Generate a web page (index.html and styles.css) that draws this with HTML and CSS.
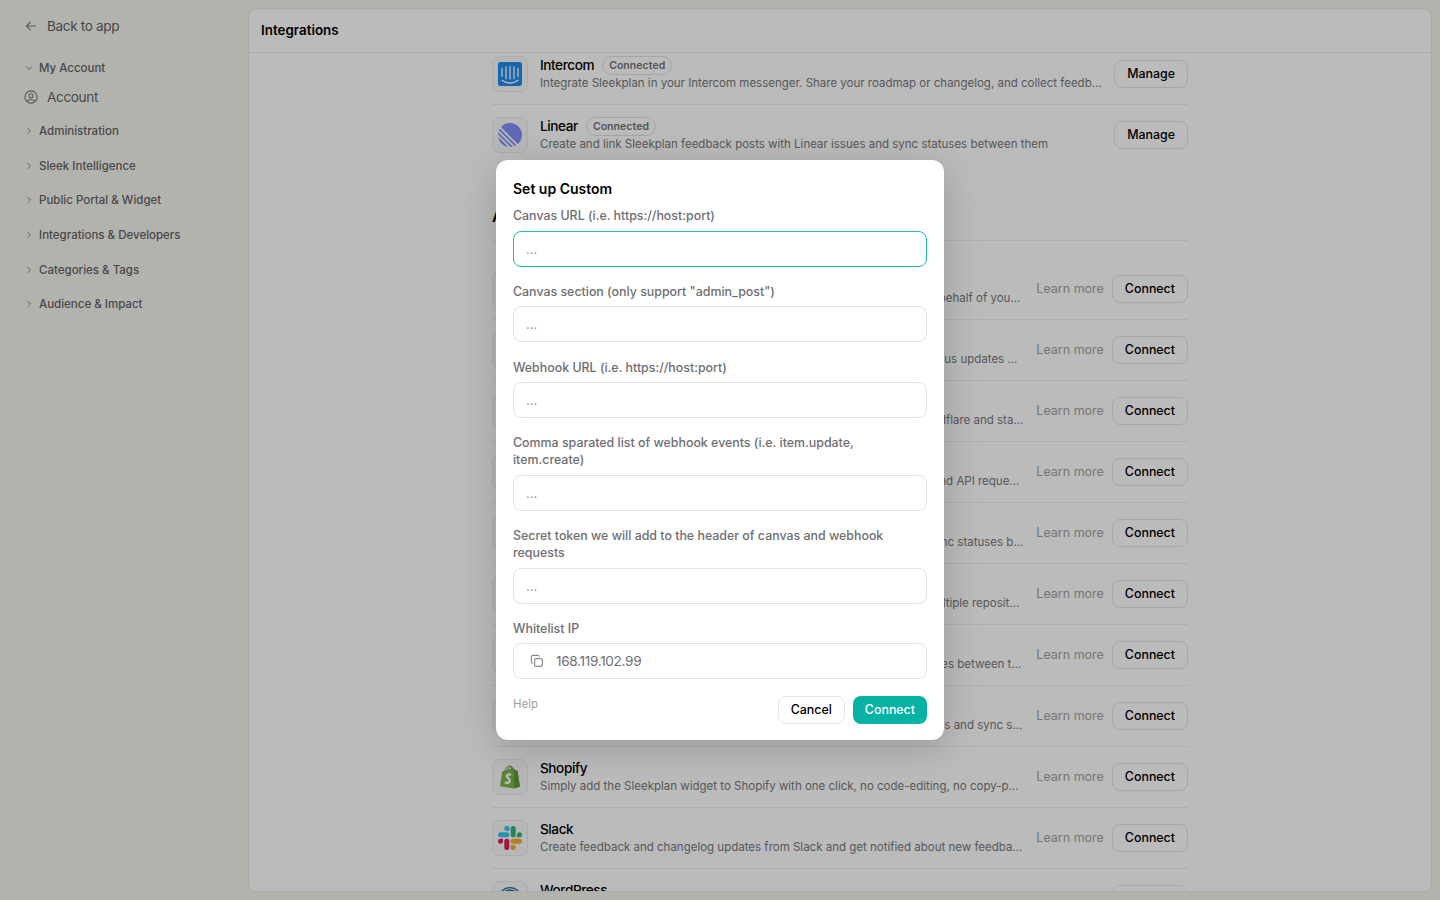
FILE: index.html
```html
<!DOCTYPE html>
<html lang="en">
<head>
<meta charset="utf-8">
<title>Integrations</title>
<link rel="stylesheet" href="styles.css">
</head>
<body>
<div class="app">
  <nav class="sidebar">
    <a class="nav-link back"><svg width="16" height="16" viewBox="0 0 16 16"><path d="M12.500 8h-9M7.300 4.200 3.500 8l3.800 3.800"/></svg><span>Back to app</span></a>
    <div class="nav-group first"><svg width="8" height="8" viewBox="0 0 8 8"><path d="M1.200 2.700 4 5.500l2.800-2.800"/></svg><span>My Account</span></div>
    <a class="nav-link account"><svg width="16" height="16" viewBox="0 0 16 16"><circle cx="8" cy="8" r="6.100"/><circle cx="8" cy="6.800" r="2"/><path d="M4.300 12.700c.3-1.500 1.300-2 2.500-2h2.400c1.200 0 2.200.5 2.500 2"/></svg><span>Account</span></a>
    <div class="nav-group"><svg width="8" height="8" viewBox="0 0 8 8"><path d="M2.700 1.200 5.500 4 2.700 6.800"/></svg><span>Administration</span></div>
    <div class="nav-group"><svg width="8" height="8" viewBox="0 0 8 8"><path d="M2.700 1.200 5.500 4 2.700 6.800"/></svg><span>Sleek Intelligence</span></div>
    <div class="nav-group"><svg width="8" height="8" viewBox="0 0 8 8"><path d="M2.700 1.200 5.500 4 2.700 6.800"/></svg><span>Public Portal &amp; Widget</span></div>
    <div class="nav-group"><svg width="8" height="8" viewBox="0 0 8 8"><path d="M2.700 1.200 5.500 4 2.700 6.800"/></svg><span>Integrations &amp; Developers</span></div>
    <div class="nav-group"><svg width="8" height="8" viewBox="0 0 8 8"><path d="M2.700 1.200 5.500 4 2.700 6.800"/></svg><span>Categories &amp; Tags</span></div>
    <div class="nav-group"><svg width="8" height="8" viewBox="0 0 8 8"><path d="M2.700 1.200 5.500 4 2.700 6.800"/></svg><span>Audience &amp; Impact</span></div>
  </nav>
  <main class="panel">
    <header class="panel-head">Integrations</header>
    <div class="scroll">
      <div class="list">
        <div class="row">
          <div class="logo"><svg width="24" height="24" viewBox="0 0 24 24"><rect width="24" height="24" rx="2.500" fill="#1f8ded"/><path d="M4 6.500v8M8 5v11.500M12 4.500v12.500M16 5v11.500M20 6.500v8M4 18.300c4.500 3.600 11.500 3.600 16 0" fill="none" stroke="#fff" stroke-width="1.300" stroke-linecap="round"/></svg></div>
          <div class="info"><div class="name"><span>Intercom</span><span class="badge">Connected</span></div><div class="desc">Integrate Sleekplan in your Intercom messenger. Share your roadmap or changelog, and collect feedb...</div></div>
          <button class="btn manage">Manage</button>
        </div>
        <div class="row last">
          <div class="logo"><svg width="24" height="24" viewBox="0 0 100 100" fill="#8091f8"><path d="M1.200 61.500c-.2-1 .9-1.600 1.600-.9l36.600 36.600c.7.700.1 1.800-.9 1.600C20 94.500 5.500 80 1.200 61.500ZM0 46.900c0 .300.100.500.300.700l52.100 52.100c.200.200.4.300.7.300 2.400-.2 4.700-.5 6.900-.900.8-.2 1-1.100.5-1.600L2.600 39.500c-.5-.5-1.500-.3-1.600.5-.5 2.200-.8 4.500-1 6.900ZM4.200 29.700c-.2.400-.1.800.2 1.100l64.800 64.800c.300.3.7.4 1.100.200 1.800-.8 3.500-1.700 5.200-2.700.5-.3.600-1 .2-1.500L8.400 24.300c-.4-.4-1.200-.3-1.500.200-1 1.700-1.900 3.400-2.700 5.200ZM12.700 18.100c-.4-.4-.4-1 0-1.400C21.800 6.500 35.200 0 50.100 0 77.600 0 100 22.400 100 49.900c0 14.900-6.500 28.300-16.700 37.400-.4.400-1 .4-1.400 0L12.700 18.100Z"/></svg></div>
          <div class="info"><div class="name"><span>Linear</span><span class="badge">Connected</span></div><div class="desc">Create and link Sleekplan feedback posts with Linear issues and sync statuses between them</div></div>
          <button class="btn manage">Manage</button>
        </div>
        <h2 class="section">A</h2>
        <div class="row"><div class="logo"></div><div class="info tail" style="padding-right:4px">behalf of you...</div><a class="learn">Learn more</a><button class="btn">Connect</button></div>
        <div class="row"><div class="logo"></div><div class="info tail" style="padding-right:7px">us updates ...</div><a class="learn">Learn more</a><button class="btn">Connect</button></div>
        <div class="row"><div class="logo"></div><div class="info tail">dflare and sta...</div><a class="learn">Learn more</a><button class="btn">Connect</button></div>
        <div class="row"><div class="logo"></div><div class="info tail" style="padding-right:5px">nd API reque...</div><a class="learn">Learn more</a><button class="btn">Connect</button></div>
        <div class="row"><div class="logo"></div><div class="info tail">nc statuses b...</div><a class="learn">Learn more</a><button class="btn">Connect</button></div>
        <div class="row"><div class="logo"></div><div class="info tail" style="padding-right:5px">ltiple reposit...</div><a class="learn">Learn more</a><button class="btn">Connect</button></div>
        <div class="row"><div class="logo"></div><div class="info tail" style="padding-right:3px">es between t...</div><a class="learn">Learn more</a><button class="btn">Connect</button></div>
        <div class="row"><div class="logo"></div><div class="info tail" style="padding-right:2px">s and sync s...</div><a class="learn">Learn more</a><button class="btn">Connect</button></div>
        <div class="row">
          <div class="logo"><svg width="24" height="24" viewBox="0 0 24 24"><path d="m2 21.200 2.200-14.700 3.300-1L15 3l1 .7 1.400 1.700 2.100.3L22 21.700l-6.200 1.900Z" fill="#7ab648"/><path d="m16 3.600 1.400 1.700 2.100.4L22 21.700l-6.200 1.900Z" fill="#5e9b3e"/><path d="M7 6.500C7.700 3 9.600.8 11.500.8c1.600 0 2.200 1.700 2.300 4M9.500 6c.4-2.600 2.200-4.700 3.700-4.500 1.400.2 1.800 1.500 2 2.900" fill="none" stroke="#64943e" stroke-width="1"/><path d="M13 9.900c-1.200-.7-4-.9-4.200 1.100-.1 2 3.100 2.200 2.900 4.600-.2 2.700-2.600 3-4.900 1.500" fill="none" stroke="#fff" stroke-width="2.300"/></svg></div>
          <div class="info"><div class="name"><span>Shopify</span></div><div class="desc">Simply add the Sleekplan widget to Shopify with one click, no code-editing, no copy-p...</div></div><a class="learn">Learn more</a><button class="btn">Connect</button>
        </div>
        <div class="row">
          <div class="logo"><svg width="24" height="24" viewBox="0 0 24 24"><g fill="#36c5f0"><circle cx="8.800" cy="2.500" r="2.500"/><path d="M8.800 0a2.500 2.500 0 0 1 2.500 2.500V5H8.800Z"/><rect y="6.300" width="11.300" height="5" rx="2.500"/></g><g fill="#2eb67d"><rect x="12.700" width="5" height="11.300" rx="2.500"/><path d="M19 11.300V8.800a2.500 2.500 0 1 1 2.500 2.500Z"/></g><g fill="#ecb22e"><rect x="12.700" y="12.700" width="11.300" height="5" rx="2.500"/><path d="M12.700 19h2.500a2.500 2.500 0 1 1-2.500 2.500Z"/></g><g fill="#e01e5a"><rect x="6.300" y="12.700" width="5" height="11.300" rx="2.500"/><path d="M5 12.700v2.500a2.500 2.500 0 1 1-2.500-2.500Z"/></g></svg></div>
          <div class="info"><div class="name"><span>Slack</span></div><div class="desc">Create feedback and changelog updates from Slack and get notified about new feedba...</div></div><a class="learn">Learn more</a><button class="btn">Connect</button>
        </div>
        <div class="row">
          <div class="logo"><svg width="24" height="24" viewBox="0 0 24 24"><circle cx="12" cy="12" r="11.300" fill="#fff" stroke="#21759b" stroke-width="1.200"/><circle cx="12" cy="12" r="9.800" fill="#21759b"/><path d="M3 9h5M10 9h5M6 9l4 10 2-6M12.500 9l4 10 2.500-8" fill="none" stroke="#fff" stroke-width="1.500"/></svg></div>
          <div class="info"><div class="name"><span>WordPress</span></div><div class="desc">&nbsp;</div></div><button class="btn" aria-label="Connect"></button>
        </div>
      </div>
    </div>
  </main>
</div>
<div class="overlay">
  <section class="modal">
    <h1>Set up Custom</h1>
    <div class="field"><label>Canvas URL (i.e. https://host:port)</label><div class="input focus">...</div></div>
    <div class="field"><label>Canvas section (only support "admin_post")</label><div class="input">...</div></div>
    <div class="field"><label>Webhook URL (i.e. https://host:port)</label><div class="input">...</div></div>
    <div class="field"><label>Comma sparated list of webhook events (i.e. item.update,<br>item.create)</label><div class="input">...</div></div>
    <div class="field"><label>Secret token we will add to the header of canvas and webhook<br>requests</label><div class="input">...</div></div>
    <div class="field"><label>Whitelist IP</label><div class="input ip"><svg width="14" height="14" viewBox="0 0 14 14"><rect x="4.600" y="4.600" width="7.800" height="7.800" rx="1.500"/><path d="M2.800 9.200c-.8 0-1.400-.5-1.400-1.300V2.900c0-.8.7-1.500 1.500-1.500h5c.8 0 1.300.6 1.300 1.400"/></svg><span>168.119.102.99</span></div></div>
    <footer><a class="help">Help</a><button class="btn">Cancel</button><button class="btn primary">Connect</button></footer>
  </section>
</div>
</body>
</html>
```
FILE: styles.css
```css
* { box-sizing: border-box; }
body { margin: 0; height: 900px; overflow: hidden; background: #f5f5ee; font-family: Inter, "Liberation Sans", sans-serif; color: #000; }
h1, h2 { margin: 0; }
.app { display: flex; height: 900px; padding: 9px 9px 9px 0; }
.sidebar { width: 249px; flex: none; padding: 5px 0 0 23px; color: #626266; }
.sidebar svg { fill: none; stroke: #7c7c80; stroke-width: 1.1; stroke-linecap: round; stroke-linejoin: round; }
.nav-group svg { stroke-width: .9; }
.nav-link { display: flex; align-items: center; gap: 8px; height: 24px; font-size: 13.6px; letter-spacing: -.36px; }
.nav-link.back { height: 23px; }
.nav-group { display: flex; align-items: center; gap: 6px; height: 34.6px; padding-left: 2px; font-size: 11.5px; font-weight: 500; }
.nav-group.first { margin-top: 14px; }
.nav-link.account { margin: -1px 0 5.4px; }
.panel { flex: 1; background: #fff; border-radius: 8px; overflow: hidden; box-shadow: 0 0 2px rgba(0,0,0,.14); display: flex; flex-direction: column; }
.panel-head { height: 44px; flex: none; padding: 0 12px; line-height: 42px; font-size: 13.4px; font-weight: 600; letter-spacing: 0; border-bottom: 1px solid #ebebeb; }
.scroll { flex: 1; min-height: 0; overflow: hidden; display: flex; justify-content: center; }
.list { width: 696px; margin-top: -9px; }
.row { display: flex; align-items: center; height: 61px; border-bottom: 1px solid #eee; }
.row.last { border-bottom-color: transparent; }
.logo { width: 36px; height: 36px; flex: none; display: flex; align-items: center; justify-content: center; border: 1px solid #e9e9e9; border-radius: 8px; background: #fafafa; }
.info { flex: 1; min-width: 0; padding-left: 12px; white-space: nowrap; }
.name { display: flex; align-items: center; gap: 8px; height: 18px; line-height: 16px; padding-bottom: 1px; font-size: 13.6px; font-weight: 500; letter-spacing: -.42px; }
.badge { height: 19px; line-height: 17px; margin-top: 2px; padding: 0 6px; border: 1px solid #e2e2e2; border-radius: 10px; font-size: 10.5px; font-weight: 600; letter-spacing: .05px; color: #747478; }
.desc, .tail { font-size: 11.5px; line-height: 18px; color: #77777a; }
.tail { padding-top: 18px; padding-right: 1px; text-align: right; }
.learn { margin: 0 8px 1px 12px; font-size: 12.5px; color: #a1a1a5; }
.btn { height: 28px; flex: none; min-width: 67px; padding: 0 12px 1px; border: 1px solid #e5e5e5; border-radius: 8px; background: #fff; font-family: inherit; font-size: 12.4px; font-weight: 500; color: #000; }
.row .btn:empty { width: 76px; }
.section { height: 75px; padding-top: 40px; margin-bottom: 18px; border-bottom: 1px solid #eee; font-size: 16px; line-height: 20px; font-weight: 600; }
.overlay { position: absolute; inset: 0; display: flex; align-items: center; justify-content: center; background: rgba(0,0,0,.267); }
.modal { width: 448px; height: 580px; padding: 17px; border-radius: 12px; background: #fff; box-shadow: 0 8px 36px rgba(0,0,0,.18); }
.modal h1 { height: 30px; line-height: 23px; font-size: 14px; font-weight: 600; }
.field { margin-bottom: 16.3px; }
.field label { display: block; margin-bottom: 6.5px; font-size: 12.4px; line-height: 17px; color: #6e6e72; font-weight: 500; }
.input { height: 36px; padding: 0 12px; line-height: 35px; border: 1px solid #e2e2e5; border-radius: 8px; font-size: 13px; color: #9b9b9f; }
.input.focus { border-color: #27b9aa; }
.ip { display: flex; align-items: center; gap: 12px; padding-left: 16px; font-size: 13.6px; color: #707074; letter-spacing: -.32px; }
.ip svg { fill: none; stroke: #8a8a8e; stroke-width: 1.2; }
footer { display: flex; gap: 8px; }
.help { flex: 1; font-size: 11.5px; line-height: 16px; color: #a1a1a5; }
.primary { background: #05b2a4; border: 0; color: #fff; }
```
